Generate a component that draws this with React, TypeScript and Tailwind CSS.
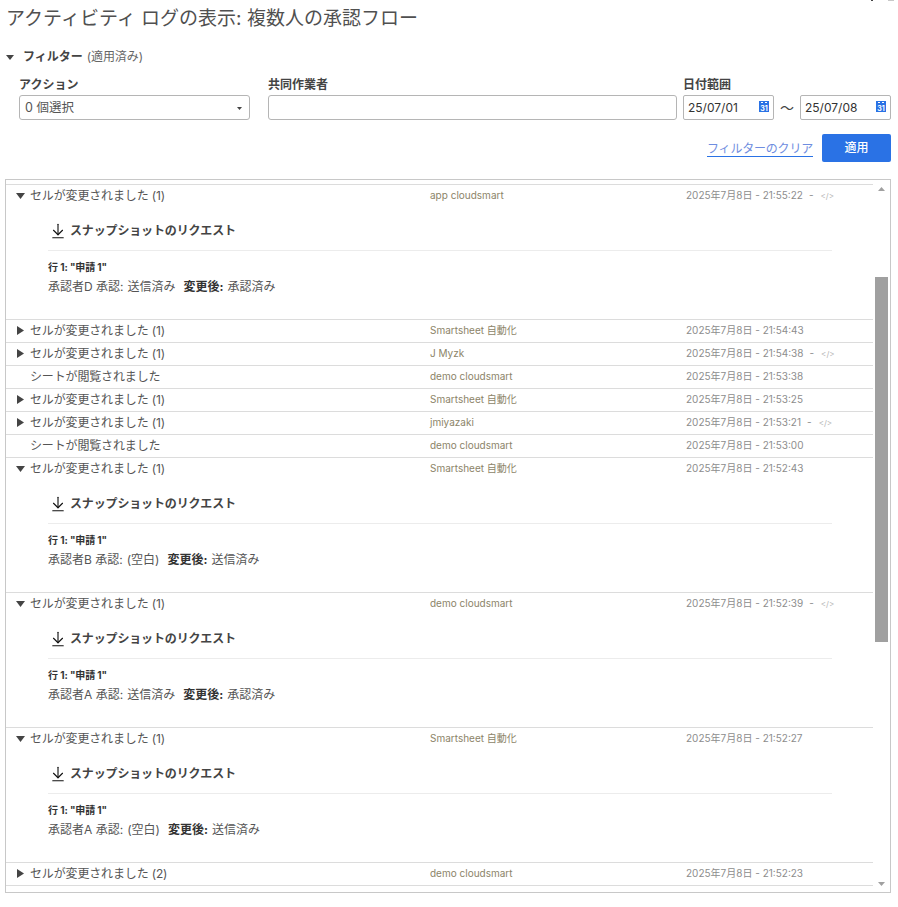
import React from 'react';
import { ArrowDownToLine } from 'lucide-react';

type Row = {
  action: string;
  user: string;
  time: string;
  state?: 'open' | 'closed' | 'none';
  code?: boolean;
  who?: string;
  before?: string;
  after?: string;
  clipped?: boolean;
};

const rows: Row[] = [
  { action: 'セルが変更されました (1)', user: 'app cloudsmart', time: '2025年7月8日 - 21:55:22', state: 'open', code: true, who: '承認者D', before: '送信済み', after: '承認済み' },
  { action: 'セルが変更されました (1)', user: 'Smartsheet 自動化', time: '2025年7月8日 - 21:54:43', state: 'closed' },
  { action: 'セルが変更されました (1)', user: 'J Myzk', time: '2025年7月8日 - 21:54:38', state: 'closed', code: true },
  { action: 'シートが閲覧されました', user: 'demo cloudsmart', time: '2025年7月8日 - 21:53:38', state: 'none' },
  { action: 'セルが変更されました (1)', user: 'Smartsheet 自動化', time: '2025年7月8日 - 21:53:25', state: 'closed' },
  { action: 'セルが変更されました (1)', user: 'jmiyazaki', time: '2025年7月8日 - 21:53:21', state: 'closed', code: true },
  { action: 'シートが閲覧されました', user: 'demo cloudsmart', time: '2025年7月8日 - 21:53:00', state: 'none' },
  { action: 'セルが変更されました (1)', user: 'Smartsheet 自動化', time: '2025年7月8日 - 21:52:43', state: 'open', who: '承認者B', before: '(空白)', after: '送信済み' },
  { action: 'セルが変更されました (1)', user: 'demo cloudsmart', time: '2025年7月8日 - 21:52:39', state: 'open', code: true, who: '承認者A', before: '送信済み', after: '承認済み' },
  { action: 'セルが変更されました (1)', user: 'Smartsheet 自動化', time: '2025年7月8日 - 21:52:27', state: 'open', who: '承認者A', before: '(空白)', after: '送信済み' },
  { action: 'セルが変更されました (2)', user: 'demo cloudsmart', time: '2025年7月8日 - 21:52:23', state: 'closed' },
  { action: '条件付き書式ルールが変更されました', user: '', time: '', state: 'none', clipped: true },
];

function TriangleDown({ className }: { className?: string }) {
  return (
    <svg viewBox="0 0 10 7" preserveAspectRatio="none" className={className} fill="currentColor">
      <path d="M0 0h10L5 7z" />
    </svg>
  );
}

function TriangleRight({ className }: { className?: string }) {
  return (
    <svg viewBox="0 0 7 10" preserveAspectRatio="none" className={className} fill="currentColor">
      <path d="M0 0v10L7 5z" />
    </svg>
  );
}

function CalendarIcon() {
  return (
    <div className="w-[10px] h-[11px] bg-[#2a72e5] flex flex-col items-center justify-between text-white">
      <div className="flex gap-[2px] mt-[1px]">
        <div className="w-[2px] h-[1px] bg-white" />
        <div className="w-[2px] h-[1px] bg-white" />
      </div>
      <div className="text-[7px] leading-[7px] font-bold">31</div>
    </div>
  );
}

function LogRow({ row }: { row: Row }) {
  return (
    <div className="border-t border-[#dcdcdc]">
      <div className={row.clipped ? 'h-[22px] flex items-center pt-[5px]' : 'h-[22px] flex items-center pb-[1px]'}>
        <div className="w-[24px] pl-[10px] shrink-0">
          {row.state === 'open' && <TriangleDown className="w-[9px] h-[6px] text-[#444444]" />}
          {row.state === 'closed' && <TriangleRight className="w-[7px] h-[9px] ml-[1px] text-[#444444]" />}
        </div>
        <div className="w-[400px] shrink-0 text-xs tracking-[-0.15px] text-[#555555]">{row.action}</div>
        <div className="w-[256px] shrink-0 text-[10px] text-[#8c8468]">{row.user}</div>
        <div className="flex items-center text-[10px] text-[#8d8d8d] whitespace-nowrap">
          <span>{row.time}</span>
          {row.code && <span className="ml-[6px]">-</span>}
          {row.code && <span className="ml-[7px] text-[8px] text-[#b5b5b5]">&lt;/&gt;</span>}
        </div>
      </div>
      {row.state === 'open' && (
        <div className="h-[112px] pl-[42px]">
          <div className="w-[784px] h-[44px] border-b border-[#ececec] flex items-center pt-[4px]">
            <ArrowDownToLine className="w-[18px] h-[18px] text-[#111111] ml-[1px] mr-[3px]" strokeWidth={1.5} />
            <span className="text-xs font-bold tracking-[-0.15px] text-[#444444]">スナップショットのリクエスト</span>
          </div>
          <div className="mt-[9px] text-[10px] leading-[14px] font-bold tracking-[-0.1px] text-[#333333]">行 1: "申請 1"</div>
          <div className="mt-[5px] text-xs leading-[16px] text-[#555555] flex">
            <span>{row.who} 承認:</span>
            <span className="ml-[4px]">{row.before}</span>
            <span className="ml-[8px] font-bold text-[#333333]">変更後:</span>
            <span className="ml-[4px]">{row.after}</span>
          </div>
        </div>
      )}
    </div>
  );
}

export default function App() {
  return (
    <div className="relative w-[898px] h-[907px] bg-white overflow-hidden font-['Inter','Noto_Sans_CJK_JP',sans-serif] text-[#444444]">
      <div className="absolute top-0 left-[871px] w-[2px] h-[1px] bg-[#444444]" />
      <div className="absolute top-0 left-[888px] w-[6px] h-[1px] bg-[#c8c8c8]" />

      <div className="px-[6px] pt-[6px] text-[19px] leading-[26px] text-[#505050]">アクティビティ ログの表示: 複数人の承認フロー</div>

      <div className="mt-[18px] pl-[6px] h-[14px] flex items-center">
        <TriangleDown className="w-[8px] h-[5px] text-[#444444]" />
        <span className="ml-[9px] text-xs font-bold">フィルター</span>
        <span className="ml-[4px] text-xs tracking-[-0.1px] text-[#666666]">(適用済み)</span>
      </div>

      <div className="mt-[14px] pl-[19px] pr-[7px] flex">
        <div className="w-[231px] shrink-0">
          <div className="text-xs leading-[14px] font-bold">アクション</div>
          <div className="mt-[3px] h-[25px] border border-[#b5b5b5] rounded-[3px] flex items-center justify-between pl-[5px] pr-[6px] pt-[1px] text-[12.5px] text-[#555555]">
            <span>0 個選択</span>
            <TriangleDown className="w-[5px] h-[3px] mr-[1px] text-[#444444]" />
          </div>
        </div>
        <div className="ml-[18px] w-[409px] shrink-0">
          <div className="text-xs leading-[14px] font-bold">共同作業者</div>
          <div className="mt-[3px] h-[25px] border border-[#b5b5b5] rounded-[3px]" />
        </div>
        <div className="ml-[6px] flex-1">
          <div className="text-xs leading-[14px] font-bold">日付範囲</div>
          <div className="mt-[3px] flex items-center">
            <div className="w-[91px] h-[25px] border border-[#b5b5b5] rounded-[2px] flex items-center justify-between px-[4px] pt-[1px] text-xs text-[#333333]">
              <span>25/07/01</span>
              <div className="-mt-[4px]"><CalendarIcon /></div>
            </div>
            <span className="w-[26px] text-center text-sm">〜</span>
            <div className="w-[91px] h-[25px] border border-[#b5b5b5] rounded-[2px] flex items-center justify-between px-[4px] pt-[1px] text-xs text-[#333333]">
              <span>25/07/08</span>
              <div className="-mt-[4px]"><CalendarIcon /></div>
            </div>
          </div>
        </div>
      </div>

      <div className="mt-[14px] pr-[7px] flex items-center justify-end">
        <span className="mt-[2px] text-xs tracking-[-0.2px] text-[#6f8de0] border-b border-[#2a72e5] leading-[15px]">フィルターのクリア</span>
        <button className="ml-[9px] w-[69px] h-[28px] bg-[#2a72e5] rounded-[2px] text-white text-xs font-medium">適用</button>
      </div>

      <div className="mt-[17px] ml-[5px] w-[886px] h-[714px] border border-[#c8c8c8] flex overflow-hidden">
        <div className="w-[867px] shrink-0 pt-[4px] h-full overflow-hidden">
          {rows.map((row, i) => (
            <LogRow key={i} row={row} />
          ))}
        </div>
        <div className="flex-1 relative flex flex-col items-center">
          <TriangleDown className="w-[7px] h-[4px] mt-[7px] text-[#a0a0a0] rotate-180" />
          <div className="w-[13px] h-[365px] mt-[86px] bg-[#a0a0a0]" />
          <div className="flex-1" />
          <TriangleDown className="w-[7px] h-[4px] mb-[6px] text-[#a0a0a0]" />
        </div>
      </div>
    </div>
  );
}
